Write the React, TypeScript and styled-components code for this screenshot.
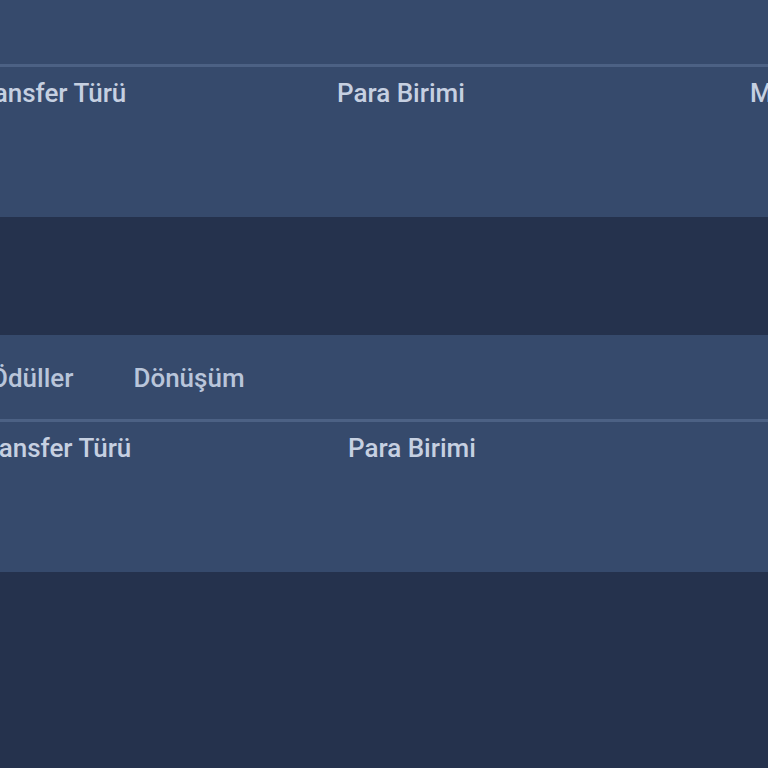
import styled, { createGlobalStyle } from "styled-components";

const GlobalStyle = createGlobalStyle`
  html, body {
    margin: 0;
    padding: 0;
    background: #25324d;
    overflow: hidden;
  }
  body {
    font-family: Roboto, "Noto Sans", sans-serif;
    color: #c6d0e1;
  }
`;

type Column = { label: string; width: number };

const topColumns: Column[] = [
  { label: "Transfer Türü", width: 367 },
  { label: "Para Birimi", width: 413 },
  { label: "Miktar", width: 300 },
];

const bottomColumns: Column[] = [
  { label: "Transfer Türü", width: 373 },
  { label: "Para Birimi", width: 420 },
  { label: "Miktar", width: 300 },
];

export default function App() {
  return (
    <>
      <GlobalStyle />
      <Page>
        <Panel $offset={-20}>
          <TabBar />
          <TableHead $shift={-30}>
            {topColumns.map((c) => (
              <HeadCell key={c.label} $width={c.width}>
                {c.label}
              </HeadCell>
            ))}
          </TableHead>
        </Panel>

        <Panel $offset={118}>
          <TabBar $shift={-10}>
            <Tab>Ödüller</Tab>
            <Tab>Dönüşüm</Tab>
          </TabBar>
          <TableHead $shift={-25}>
            {bottomColumns.map((c) => (
              <HeadCell key={c.label} $width={c.width}>
                {c.label}
              </HeadCell>
            ))}
          </TableHead>
        </Panel>
      </Page>
    </>
  );
}

const Page = styled.div`
  display: flex;
  flex-direction: column;
  width: 768px;
  min-height: 768px;
  overflow: hidden;
`;

const Panel = styled.section<{ $offset: number }>`
  margin-top: ${(p) => p.$offset}px;
  background: #364a6c;
  display: flex;
  flex-direction: column;
`;

const TabBar = styled.div<{ $shift?: number }>`
  height: 87px;
  display: flex;
  align-items: center;
  gap: 60px;
  margin-left: ${(p) => p.$shift ?? 0}px;
  border-bottom: 3px solid #4c6184;
  padding-top: 2px;
  box-sizing: border-box;
`;

const Tab = styled.span`
  font-size: 26px;
  font-weight: 500;
  color: #b9c5da;
  white-space: nowrap;
`;

const TableHead = styled.div<{ $shift: number }>`
  height: 150px;
  display: flex;
  align-items: flex-start;
  margin-left: ${(p) => p.$shift}px;
  padding-top: 11px;
  box-sizing: border-box;
`;

const HeadCell = styled.div<{ $width: number }>`
  flex: 0 0 ${(p) => p.$width}px;
  font-size: 26px;
  font-weight: 500;
  line-height: 30px;
  color: #c6d0e1;
  white-space: nowrap;
`;
